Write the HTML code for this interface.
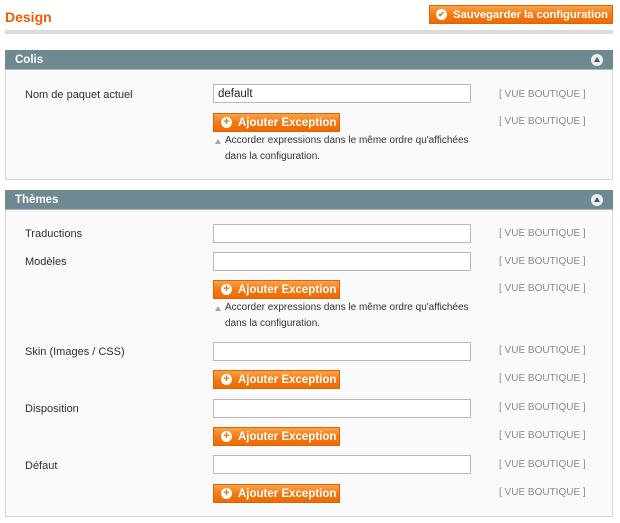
<!DOCTYPE html>
<html><head><meta charset="utf-8"><style>
*{margin:0;padding:0;box-sizing:border-box}
body{width:620px;height:523px;background:#fff;font-family:"Liberation Sans",Arial,sans-serif;font-size:11px;color:#2f2f2f;position:relative;overflow:hidden}
.a{position:absolute;white-space:nowrap}
.title{left:5px;top:9px;font-size:14px;font-weight:bold;color:#eb5e00}
.save{left:429px;top:5px;width:184px;height:19px;background:linear-gradient(#f8a34a,#f47a14 50%,#ee6a00);border:1px solid #e06200;color:#fff;font-weight:bold;font-size:11.4px;letter-spacing:-0.1px;line-height:18px;padding-left:23px;overflow:hidden}
.save i{position:absolute;left:6px;top:3px;width:11px;height:11px;border-radius:50%;background:#fff;color:#f07000;font-size:8px;line-height:11px;text-align:center;font-style:normal;letter-spacing:0}
.bar{left:5px;top:30px;width:608px;height:4px;background:#dcdcdc}
.box{left:5px;width:608px;background:#fafafa;border:1px solid #d6d6d6}
.hd{left:5px;width:608px;height:20px;background:#6f8992;color:#fff;font-weight:bold;font-size:11.5px;line-height:20px;padding-left:10px;border-bottom:1px solid #a8b8bd}
.hd i{position:absolute;right:10px;top:4px;width:12px;height:12px;border-radius:50%;background:#eaeff0;font-style:normal}
.hd i:after{content:"";position:absolute;left:3px;top:3px;border-left:3px solid transparent;border-right:3px solid transparent;border-bottom:5px solid #555}
.lbl{left:25px}
.inp{left:213px;width:258px;height:19px;background:#fff;border:1px solid #b9b9b9;padding-left:4px;line-height:18px;font-size:11.5px;color:#222}
.vb{left:499px;color:#8a8a8a;font-size:10px}
.btn{left:213px;width:127px;height:19px;background:linear-gradient(#f8a34a,#f47a14 50%,#ee6a00);border:1px solid #e06200;color:#fff;font-weight:bold;font-size:11.5px;line-height:18px;padding-left:24px}
.btn i{position:absolute;left:7px;top:3px;width:11px;height:11px;border-radius:50%;background:#fff;color:#f07000;font-size:11px;font-weight:bold;line-height:11px;text-align:center;font-style:normal}
.note{left:215px;font-size:10px;line-height:16px;color:#333;padding-left:10px}
.note:before{content:"";position:absolute;left:0;top:6px;border-left:3px solid transparent;border-right:3px solid transparent;border-bottom:5px solid #9aa}
</style></head><body>
<div class="a title">Design</div>
<div class="a save"><i>✔</i>Sauvegarder la configuration</div>
<div class="a bar"></div>

<div class="a box" style="top:50px;height:130px"></div>
<div class="a hd" style="top:50px">Colis<i></i></div>
<div class="a lbl" style="top:89px">Nom de paquet actuel</div>
<div class="a inp" style="top:84px">default</div>
<div class="a vb" style="top:89px">[ VUE BOUTIQUE ]</div>
<div class="a btn" style="top:113px"><i>+</i>Ajouter Exception</div>
<div class="a vb" style="top:116px">[ VUE BOUTIQUE ]</div>
<div class="a note" style="top:133px">Accorder expressions dans le même ordre qu'affichées<br>dans la configuration.</div>

<div class="a box" style="top:190px;height:327px"></div>
<div class="a hd" style="top:190px">Thèmes<i></i></div>
<div class="a lbl" style="top:228px">Traductions</div>
<div class="a inp" style="top:224px"></div>
<div class="a vb" style="top:228px">[ VUE BOUTIQUE ]</div>
<div class="a lbl" style="top:256px">Modèles</div>
<div class="a inp" style="top:252px"></div>
<div class="a vb" style="top:256px">[ VUE BOUTIQUE ]</div>
<div class="a btn" style="top:280px"><i>+</i>Ajouter Exception</div>
<div class="a vb" style="top:283px">[ VUE BOUTIQUE ]</div>
<div class="a note" style="top:300px">Accorder expressions dans le même ordre qu'affichées<br>dans la configuration.</div>
<div class="a lbl" style="top:346px">Skin (Images / CSS)</div>
<div class="a inp" style="top:342px"></div>
<div class="a vb" style="top:345px">[ VUE BOUTIQUE ]</div>
<div class="a btn" style="top:370px"><i>+</i>Ajouter Exception</div>
<div class="a vb" style="top:373px">[ VUE BOUTIQUE ]</div>
<div class="a lbl" style="top:403px">Disposition</div>
<div class="a inp" style="top:399px"></div>
<div class="a vb" style="top:402px">[ VUE BOUTIQUE ]</div>
<div class="a btn" style="top:427px"><i>+</i>Ajouter Exception</div>
<div class="a vb" style="top:430px">[ VUE BOUTIQUE ]</div>
<div class="a lbl" style="top:460px">Défaut</div>
<div class="a inp" style="top:455px"></div>
<div class="a vb" style="top:459px">[ VUE BOUTIQUE ]</div>
<div class="a btn" style="top:484px"><i>+</i>Ajouter Exception</div>
<div class="a vb" style="top:487px">[ VUE BOUTIQUE ]</div>
</body></html>
